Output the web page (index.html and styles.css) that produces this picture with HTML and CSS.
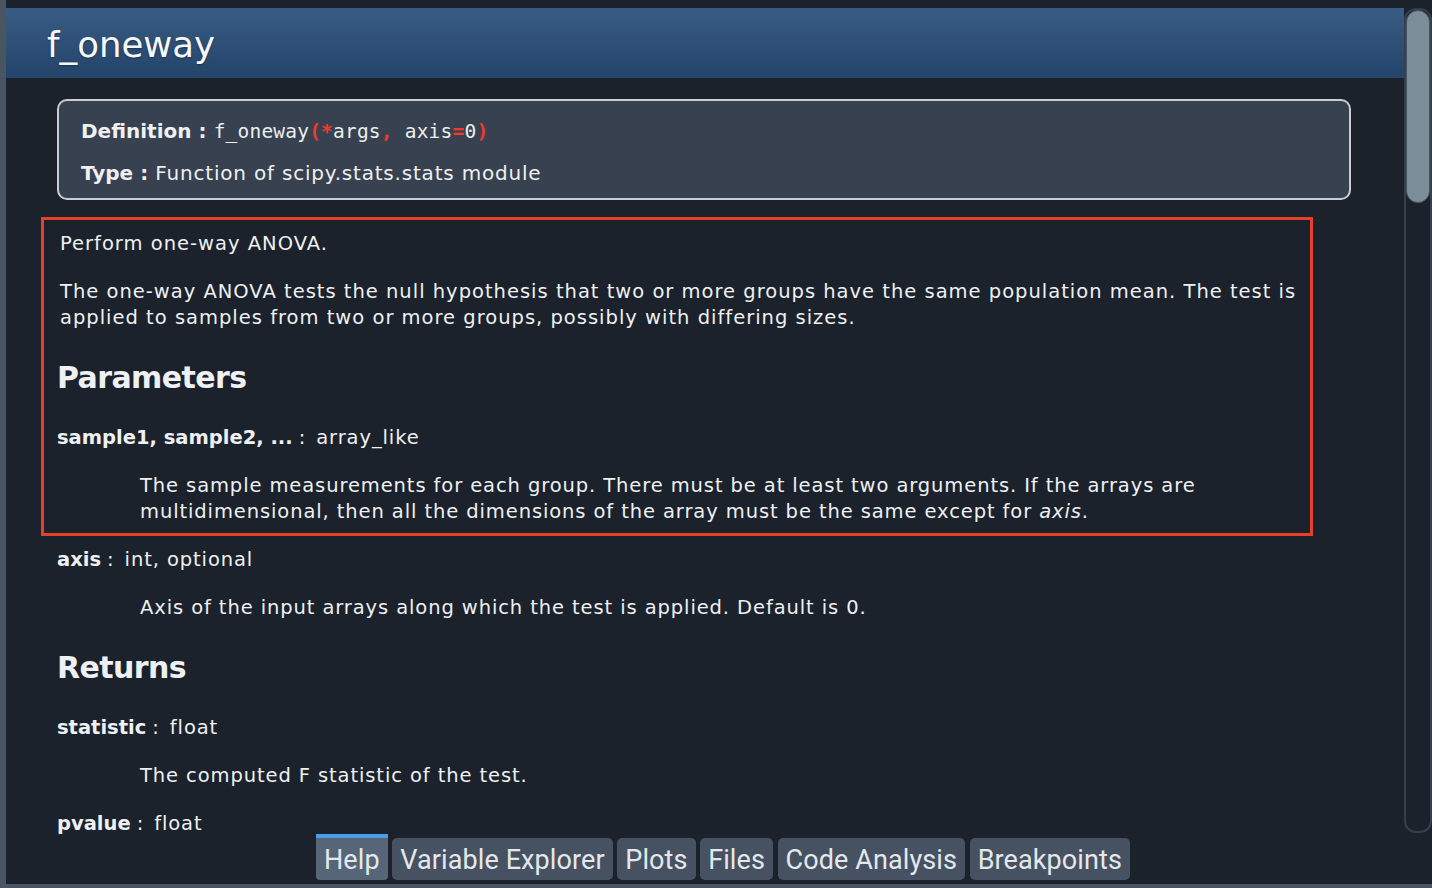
FILE: index.html
```html
<!DOCTYPE html>
<html>
<head>
<meta charset="utf-8">
<link rel="stylesheet" href="styles.css">
</head>
<body>
<div class="window">
  <div class="pane">
    <div class="doc">
      <div class="title">f_oneway</div>
      <div class="body">
        <div class="defbox">
          <p class="defline"><b>Definition :</b> <code>f_oneway<span class="op">(*</span>args<span class="op">, </span>axis<span class="op">=</span>0<span class="op">)</span></code></p>
          <p class="typeline"><b>Type :</b> Function of scipy.stats.stats module</p>
        </div>
        <p class="para first">Perform one-way ANOVA.</p>
        <p class="para">The one-way ANOVA tests the null hypothesis that two or more groups have the same population mean. The test is applied to samples from two or more groups, possibly with differing sizes.</p>
        <h2 class="section">Parameters</h2>
        <p class="term"><b>sample1, sample2, ...</b><span class="sep">:</span>array_like</p>
        <p class="desc">The sample measurements for each group. There must be at least two arguments. If the arrays are multidimensional, then all the dimensions of the array must be the same except for <i>axis</i>.</p>
        <p class="term"><b>axis</b><span class="sep">:</span>int, optional</p>
        <p class="desc">Axis of the input arrays along which the test is applied. Default is 0.</p>
        <h2 class="section">Returns</h2>
        <p class="term"><b>statistic</b><span class="sep">:</span>float</p>
        <p class="desc">The computed F statistic of the test.</p>
        <p class="term"><b>pvalue</b><span class="sep">:</span>float</p>
      </div>
      <div class="highlight"></div>
    </div>
    <div class="scrollbar"><div class="thumb"></div></div>
  </div>
  <div class="tabs">
    <div class="tab active">Help</div>
    <div class="tab">Variable Explorer</div>
    <div class="tab">Plots</div>
    <div class="tab">Files</div>
    <div class="tab">Code Analysis</div>
    <div class="tab">Breakpoints</div>
  </div>
</div>
</body>
</html>
```

FILE: styles.css
```css
html, body {
  margin: 0;
  padding: 0;
  background: #4a5563;
  height: 888px;
  overflow: hidden;
}

.window {
  margin-left: 6px;
  height: 884px;
  background: #1b222c;
  display: flex;
  flex-direction: column;
  padding-top: 8px;
  box-sizing: border-box;
  font-family: "DejaVu Sans", "Open Sans", sans-serif;
  color: #eef0f2;
}

.pane {
  flex: 1;
  display: flex;
  min-height: 0;
}

.doc {
  flex: 1;
  position: relative;
  overflow: hidden;
}

.title {
  height: 70px;
  box-sizing: border-box;
  background: linear-gradient(#385c83, #24446a);
  padding: 2px 0 0 41px;
  font-size: 35.5px;
  line-height: 70px;
  color: #f6f8fa;
  text-shadow: 0 1px 2px rgba(0, 0, 0, 0.35);
}

.body {
  padding: 21px 53px 0 51px;
}

b {
  font-weight: bold;
  letter-spacing: 0;
}

.defbox {
  height: 101px;
  box-sizing: border-box;
  background: #384150;
  border: 2px solid #c9cdd2;
  border-radius: 10px;
  padding: 18px 22px 0;
}

.defbox p {
  margin: 0;
  font-size: 20px;
  line-height: 24px;
  letter-spacing: 0.8px;
}

.defbox .typeline {
  margin-top: 17px;
}

code {
  font-family: "DejaVu Sans Mono", "Liberation Mono", monospace;
  font-size: 19.5px;
  letter-spacing: 0.2px;
  color: #eceef0;
}

.op {
  color: #f2392c;
  font-weight: bold;
}

.para {
  margin: 22px 0 0 3px;
  font-size: 19.5px;
  line-height: 26px;
  letter-spacing: 1px;
}

.para.first {
  margin-top: 31px;
}

.section {
  margin: 27px 0 0;
  font-size: 30px;
  line-height: 40px;
  font-weight: bold;
  letter-spacing: -0.6px;
}

.term {
  margin: 25px 0 0;
  font-size: 19.5px;
  line-height: 26px;
  letter-spacing: 0.9px;
}

.sep {
  letter-spacing: 0;
  margin: 0 11px 0 6px;
}

.section + .term {
  margin-top: 27px;
}

.desc + .term {
  margin-top: 22px;
}

.desc {
  margin: 22px 0 0 83px;
  font-size: 19.5px;
  line-height: 26px;
  letter-spacing: 0.9px;
}

.desc + .section {
  margin-top: 27px;
}

.highlight {
  position: absolute;
  left: 35px;
  top: 209px;
  width: 1272px;
  height: 319px;
  box-sizing: border-box;
  border: 3px solid #e6402a;
  pointer-events: none;
}

.scrollbar {
  width: 28px;
  height: 825px;
  box-sizing: border-box;
  border: 2px solid #373f4c;
  border-radius: 12px;
}

.thumb {
  height: 191px;
  background: #7a8d99;
  border-radius: 12px;
  border: 1px solid #4a5563;
}

.tabs {
  height: 50px;
  display: flex;
  align-items: flex-end;
  gap: 4.6px;
  padding: 0 0 4px 310px;
  box-sizing: border-box;
}

.tab {
  height: 42px;
  box-sizing: border-box;
  padding: 0 8px;
  background: #465262;
  border-radius: 5px;
  font-family: Roboto, "Liberation Sans", sans-serif;
  font-size: 27px;
  letter-spacing: 0.1px;
  line-height: 44px;
  color: #e4e8ec;
}

.tab.active {
  height: 46px;
  padding: 0 8px;
  background: #566577;
  border-top: 4px solid #4a9ee8;
  border-radius: 0 0 4px 4px;
  line-height: 44px;
}
```
